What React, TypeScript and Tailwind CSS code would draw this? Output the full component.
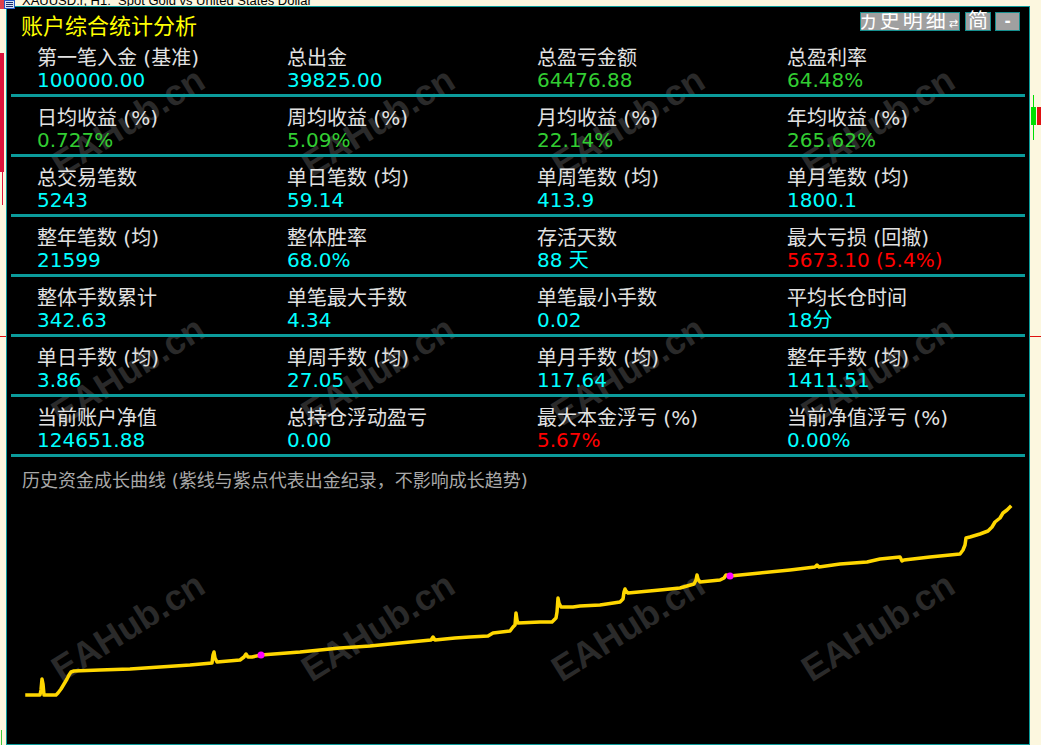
import React from "react";

type Tone = "c" | "g" | "r";

const tones: Record<Tone, string> = {
  c: "text-[#00ffff]",
  g: "text-[#32cd32]",
  r: "text-[#ff0000]",
};

const stats: [string, string, Tone][][] = [
  [
    ["第一笔入金 (基准)", "100000.00", "c"],
    ["总出金", "39825.00", "c"],
    ["总盈亏金额", "64476.88", "g"],
    ["总盈利率", "64.48%", "g"],
  ],
  [
    ["日均收益 (%)", "0.727%", "g"],
    ["周均收益 (%)", "5.09%", "g"],
    ["月均收益 (%)", "22.14%", "g"],
    ["年均收益 (%)", "265.62%", "g"],
  ],
  [
    ["总交易笔数", "5243", "c"],
    ["单日笔数 (均)", "59.14", "c"],
    ["单周笔数 (均)", "413.9", "c"],
    ["单月笔数 (均)", "1800.1", "c"],
  ],
  [
    ["整年笔数 (均)", "21599", "c"],
    ["整体胜率", "68.0%", "c"],
    ["存活天数", "88 天", "c"],
    ["最大亏损 (回撤)", "5673.10 (5.4%)", "r"],
  ],
  [
    ["整体手数累计", "342.63", "c"],
    ["单笔最大手数", "4.34", "c"],
    ["单笔最小手数", "0.02", "c"],
    ["平均长仓时间", "18分", "c"],
  ],
  [
    ["单日手数 (均)", "3.86", "c"],
    ["单周手数 (均)", "27.05", "c"],
    ["单月手数 (均)", "117.64", "c"],
    ["整年手数 (均)", "1411.51", "c"],
  ],
  [
    ["当前账户净值", "124651.88", "c"],
    ["总持仓浮动盈亏", "0.00", "c"],
    ["最大本金浮亏 (%)", "5.67%", "r"],
    ["当前净值浮亏 (%)", "0.00%", "c"],
  ],
];

// watermark spots, relative to the panel's inner box
const marks = [
  "left-[121px] top-[115px]",
  "left-[371px] top-[115px]",
  "left-[621px] top-[115px]",
  "left-[871px] top-[115px]",
  "left-[121px] top-[364px]",
  "left-[371px] top-[364px]",
  "left-[621px] top-[364px]",
  "left-[871px] top-[364px]",
  "left-[121px] top-[620px]",
  "left-[371px] top-[620px]",
  "left-[621px] top-[620px]",
  "left-[871px] top-[620px]",
];

const equity =
  "27,695 40,695 41,690 42,679 43,684 44,695 56,695 58,693 61,689 64,684 67,679 69,675 71,672 74,671 100,670 130,669 160,667 190,665 212,663 213,655 214,652 215,658 217,662 240,660 244,657 246,654 248,657 252,657 261,655 " +
  "300,652 340,648 370,646 400,643 431,640 433,637 435,640 455,638 470,637 488,636 493,633 510,631 513,627 515,625 516,613 517,620 518,623 540,622 552,622 556,618 557,612 558,598 559,603 561,607 573,607 580,606 600,605 620,602 623,599 624,592 625,589 626,591 628,593 660,590 680,588 694,584 696,580 697,575 698,579 700,582 720,580 724,578 726,575 730,576 " +
  "760,573 790,570 815,567 817,565 819,567 840,564 867,562 880,559 900,557 902,561 904,560 930,557 960,554 963,550 965,545 966,538 970,537 980,534 988,531 992,527 995,522 1000,518 1003,513 1007,510 1010,507";

function WindowIcon() {
  return (
    <svg width="16" height="9" viewBox="0 0 16 9" className="absolute left-0 top-0 z-20">
      <rect x="0" y="0" width="4" height="9" fill="#e0404a" />
      <rect x="4.5" y="0.5" width="10" height="8" fill="#d6e2f4" stroke="#2456c4" />
      <line x1="6" y1="2.5" x2="13" y2="2.5" stroke="#1f2f70" />
      <line x1="6" y1="4.5" x2="13" y2="4.5" stroke="#1f2f70" />
      <line x1="6" y1="6.5" x2="13" y2="6.5" stroke="#1f2f70" />
    </svg>
  );
}

export default function App() {
  return (
    <div className="relative w-[1041px] h-[745px] overflow-hidden bg-[#fcf7df] font-['DejaVu_Sans','Noto_Sans_CJK_SC',sans-serif]">
      <WindowIcon />

      {/* chart window caption, cut off at the top */}
      <div className="h-[6px] overflow-hidden pl-[22px]">
        <div className="-mt-[6px] text-[13px] leading-[13px] text-black font-['Liberation_Sans',sans-serif] whitespace-pre">
          XAUUSD.r, H1:  Spot Gold vs United States Dollar
        </div>
      </div>

      <div className="flex h-[739px]">
        {/* left margin of the chart */}
        <div className="w-[6px] flex flex-col">
          <div className="mt-[47px] w-[4px] h-[119px] bg-[#dc143c]" />
          <div className="ml-[2px] w-px h-[33px] bg-[#dc143c]" />
          <div className="mt-[131px] h-px w-full bg-[#e01010]" />
          <div className="mt-[393px] ml-[1px] w-px flex-1 bg-[#3cc83c]" />
        </div>

        {/* stats panel */}
        <div className="relative w-[1024px] h-full border border-[#0b9b9b] bg-black">
          <div className="absolute inset-0 overflow-hidden pointer-events-none">
            {marks.map((pos) => (
              <div
                key={pos}
                className={`absolute ${pos} -translate-x-1/2 -translate-y-1/2 rotate-[-32deg] font-['Liberation_Sans',sans-serif] font-bold text-[36px] leading-none text-[#2a2a2a] whitespace-nowrap`}
              >
                EAHub.cn
              </div>
            ))}
          </div>

          <div className="relative flex flex-col h-full">
            {/* header */}
            <div className="h-[30px] flex items-start justify-between">
              <div className="pl-[14px] pt-[10px] text-[22px] leading-[20px] text-[#ffff00]">
                账户综合统计分析
              </div>
              <div className="flex pt-[5px] pr-[9px]">
                <div className="w-[100px] h-[19px] bg-[#a0a0a0] border border-[#168f8f] overflow-hidden flex justify-end items-center pr-[1px]">
                  <span className="text-[20px] leading-[19px] text-white whitespace-nowrap tracking-[3px]">
                    历史明细
                  </span>
                  <span className="text-[11px] leading-[11px] text-white self-end mb-[1px]">⇄</span>
                </div>
                <div className="ml-[5px] w-[26px] h-[19px] bg-[#a0a0a0] border border-[#168f8f] flex items-center justify-center text-[20px] leading-[19px] text-white">
                  简
                </div>
                <div className="ml-[4px] w-[25px] h-[19px] bg-[#a0a0a0] border border-[#168f8f] flex items-center justify-center text-[15px] leading-[17px] font-bold text-white">
                  -
                </div>
              </div>
            </div>

            {/* stat rows */}
            {stats.map((row, i) => (
              <div
                key={i}
                className="mx-[4px] h-[60px] pl-[26px] pt-[11px] border-b-[3px] border-[#0b9b9b] grid grid-cols-[repeat(4,250px)]"
              >
                {row.map(([label, value, tone]) => (
                  <div key={label}>
                    <div className="text-[20px] leading-[20px] text-[#e2e2e2] whitespace-nowrap">{label}</div>
                    <div className={`text-[20px] leading-[24px] whitespace-nowrap ${tones[tone]}`}>{value}</div>
                  </div>
                ))}
              </div>
            ))}

            {/* equity curve */}
            <div className="flex-1 flex flex-col">
              <div className="pl-[15px] pt-[14px] text-[18px] leading-[20px] text-[#a8a8a8] whitespace-nowrap">
                历史资金成长曲线 (紫线与紫点代表出金纪录，不影响成长趋势)
              </div>
              <svg width="1022" height="252" viewBox="7 491 1022 252" className="block">
                <polyline
                  points={equity}
                  fill="none"
                  stroke="#ffd700"
                  strokeWidth="3.5"
                  strokeLinejoin="round"
                  strokeLinecap="square"
                />
                <circle cx="261" cy="655" r="3.5" fill="#ff00ff" />
                <circle cx="730" cy="576" r="3.5" fill="#ff00ff" />
              </svg>
            </div>
          </div>
        </div>

        {/* right margin with the last candle */}
        <div className="w-[11px] flex flex-col">
          <div className="mt-[89px] flex items-start">
            <div className="ml-[1px] w-[5px] flex flex-col items-center">
              <div className="w-px h-[12px] bg-[#00e000]" />
              <div className="w-[5px] h-[18px] bg-[#00e000]" />
              <div className="w-px h-[15px] bg-[#00e000]" />
            </div>
            <div className="ml-[1px] mt-[12px] w-[4px] h-[18px] bg-[#e01010]" />
          </div>
          <div className="mt-[196px] h-px w-full bg-[#e01010]" />
        </div>
      </div>
    </div>
  );
}
